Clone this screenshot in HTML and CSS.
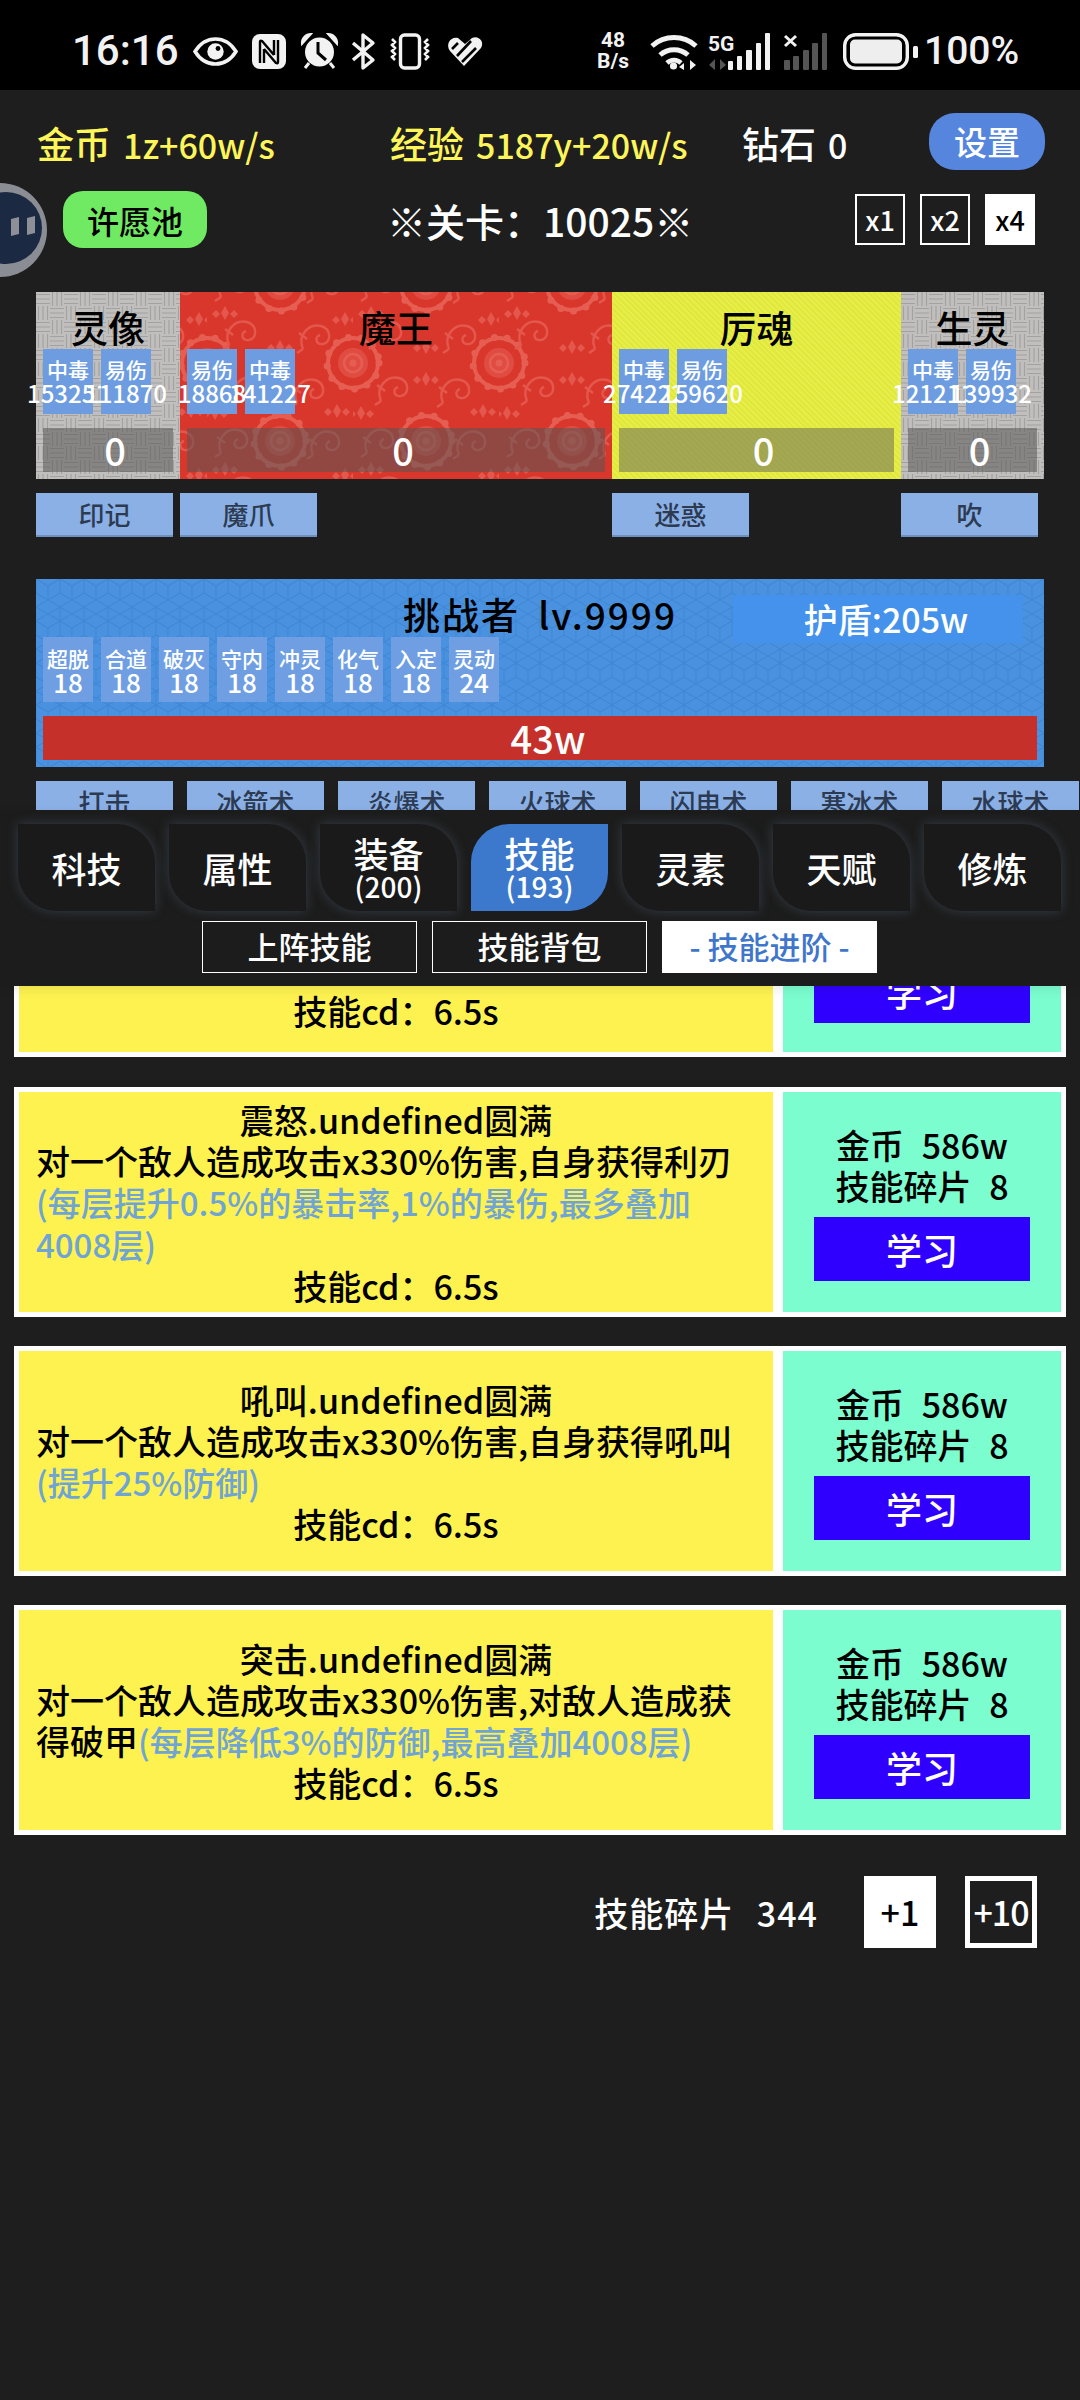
FILE: index.html
```html
<!DOCTYPE html>
<html lang="zh">
<head>
<meta charset="utf-8">
<title>技能进阶</title>
<link rel="stylesheet" href="styles.css">
</head>
<body>
<div class="screen">
  <header class="status">
    <span class="clock">16:16</span>
    <svg class="ic eye" viewBox="0 0 45 29"><path d="M2 14.5C8 5 15 2 22.5 2S37 5 43 14.5C37 24 30 27 22.5 27S8 24 2 14.5Z" fill="none" stroke="#f2f2f2" stroke-width="3.6"/><circle cx="22.5" cy="14.5" r="8.2" fill="#f2f2f2"/><circle cx="25" cy="11.5" r="2.4" fill="#000"/></svg>
    <svg class="ic nfc" viewBox="0 0 34 35"><rect width="34" height="35" rx="8" fill="#f2f2f2"/><path d="M8 29V8q0-2 2-1L22 21M26 6v22q0 2-2 1L12 15M12 15v14M22 21V6" fill="none" stroke="#000" stroke-width="2.4"/></svg>
    <svg class="ic alarm" viewBox="0 0 37 36"><circle cx="18.500" cy="19" r="14.500" fill="#f2f2f2"/><path d="M17 9v11l8 7" fill="none" stroke="#000" stroke-width="3"/><path d="M1 11A9 9 0 0 1 10 1L1 11ZM36 11A9 9 0 0 0 27 1L36 11Z" fill="#f2f2f2" stroke="#f2f2f2" stroke-width="2"/><path d="M8 30l-4 5M29 30l4 5" stroke="#f2f2f2" stroke-width="3"/></svg>
    <svg class="ic bt" viewBox="0 0 25 37"><path d="M2 10l20 17-10 8V2l10 8L2 27" fill="none" stroke="#f2f2f2" stroke-width="3.4" stroke-linejoin="round"/></svg>
    <svg class="ic vib" viewBox="0 0 42 37"><rect x="11.500" y="2" width="19" height="33" rx="4" fill="none" stroke="#f2f2f2" stroke-width="3.4"/><path d="M3 6l3 3-3 3 3 3-3 3 3 3-3 3 3 3M39 6l-3 3 3 3-3 3 3 3-3 3 3 3-3 3" fill="none" stroke="#f2f2f2" stroke-width="2.6"/></svg>
    <svg class="ic heart" viewBox="0 0 36 30"><path d="M17 30L3 15C-2 8 4 0 11 2l7 6 7-6c6-3 13 3 9 10Z" fill="#f2f2f2"/><path d="M10 20L24 5M5 13L11 7M15 26L29 12" stroke="#000" stroke-width="2.6"/></svg>
    <div class="netspeed"><span>48</span><span>B/s</span></div>
    <svg class="ic wifi" viewBox="0 0 48 37"><path d="M2 13A33 33 0 0 1 46 13" fill="none" stroke="#f2f2f2" stroke-width="5"/><path d="M10 22A21 21 0 0 1 38 22" fill="none" stroke="#f2f2f2" stroke-width="5"/><path d="M17 30A10 10 0 0 1 31 30" fill="none" stroke="#f2f2f2" stroke-width="4.600"/><circle cx="23.500" cy="33" r="3.600" fill="#f2f2f2"/><path d="M34 30l-5 4 5 3ZM40 27v10l6-5Z" fill="#f2f2f2"/></svg>
    <svg class="ic sig1" viewBox="0 0 63 37"><text x="0" y="18" class="five-g">5G</text><path d="M7 26v11l-6-5ZM12 26v11l6-5Z" fill="#555"/><g fill="#f2f2f2"><rect x="20" y="28" width="5" height="9" rx="1"/><rect x="29" y="23" width="5" height="14" rx="1"/><rect x="38" y="17" width="6" height="20" rx="1"/><rect x="48" y="10" width="5" height="27" rx="1"/><rect x="57" y="0" width="5" height="37" rx="1"/></g></svg>
    <svg class="ic sig2" viewBox="0 0 44 37"><path d="M1 3l11 10M12 3L1 13" stroke="#f2f2f2" stroke-width="3"/><g fill="#555"><rect x="0" y="27" width="6" height="10" rx="1"/><rect x="9" y="23" width="6" height="14" rx="1"/><rect x="19" y="17" width="6" height="20" rx="1"/><rect x="28" y="10" width="6" height="27" rx="1"/><rect x="38" y="0" width="5" height="37" rx="1"/></g></svg>
    <svg class="ic batt" viewBox="0 0 75 37"><rect x="1.700" y="1.700" width="62.600" height="33.600" rx="11" fill="none" stroke="#f2f2f2" stroke-width="3.400"/><rect x="7" y="6.500" width="52" height="24" rx="5" fill="#eee"/><rect x="70" y="13" width="5" height="12" rx="1.500" fill="#f2f2f2"/></svg>
    <span class="pct">100%</span>
  </header>

  <svg class="floatball" viewBox="0 0 50 100"><circle cx="0" cy="50" r="47" fill="#8a8d93"/><circle cx="6" cy="48" r="36" fill="#1b2942"/><path d="M11 39l8-2v17l-8 2ZM27 38l8-2v17l-8 2Z" fill="#8d9197"/></svg>

  <section class="stats">
    <div class="stat gold"><b>金币</b><span>1z+60w/s</span></div>
    <div class="stat gold"><b>经验</b><span>5187y+20w/s</span></div>
    <div class="stat"><b>钻石</b><span>0</span></div>
    <button class="settings">设置</button>
  </section>

  <section class="stage-row">
    <button class="wish">许愿池</button>
    <div class="stage">※关卡：10025※</div>
    <div class="speeds"><span class="speed">x1</span><span class="speed">x2</span><span class="speed on">x4</span></div>
  </section>

  <section class="enemies">
    <div class="enemy col-a stone">
      <div class="name">灵像</div>
      <div class="buffs"><div class="buff"><span>中毒</span><span class="num">153251</span></div><div class="buff"><span>易伤</span><span class="num">111870</span></div></div>
      <div class="hp">0</div>
    </div>
    <div class="enemy col-b crimson">
      <div class="name">魔王</div>
      <div class="buffs"><div class="buff"><span>易伤</span><span class="num">18868</span></div><div class="buff"><span>中毒</span><span class="num">141227</span></div></div>
      <div class="hp">0</div>
    </div>
    <div class="enemy col-c lemon">
      <div class="name">厉魂</div>
      <div class="buffs"><div class="buff"><span>中毒</span><span class="num">274222</span></div><div class="buff"><span>易伤</span><span class="num">159620</span></div></div>
      <div class="hp">0</div>
    </div>
    <div class="enemy col-d stone">
      <div class="name">生灵</div>
      <div class="buffs"><div class="buff"><span>中毒</span><span class="num">121211</span></div><div class="buff"><span>易伤</span><span class="num">139932</span></div></div>
      <div class="hp">0</div>
    </div>
  </section>

  <section class="enemy-moves">
    <div class="col-a"><button class="move">印记</button></div>
    <div class="col-b"><button class="move">魔爪</button></div>
    <div class="col-c"><button class="move">迷惑</button></div>
    <div class="col-d"><button class="move">吹</button></div>
  </section>

  <section class="hero">
    <div class="shield">护盾:205w</div>
    <div class="name">挑战者 lv.9999</div>
    <div class="buffs">
      <div class="buff"><span>超脱</span><span class="num">18</span></div>
      <div class="buff"><span>合道</span><span class="num">18</span></div>
      <div class="buff"><span>破灭</span><span class="num">18</span></div>
      <div class="buff"><span>守内</span><span class="num">18</span></div>
      <div class="buff"><span>冲灵</span><span class="num">18</span></div>
      <div class="buff"><span>化气</span><span class="num">18</span></div>
      <div class="buff"><span>入定</span><span class="num">18</span></div>
      <div class="buff"><span>灵动</span><span class="num">24</span></div>
    </div>
    <div class="hero-hp">43w</div>
  </section>

  <section class="hero-moves">
    <button class="move">打击</button>
    <button class="move">冰箭术</button>
    <button class="move">炎爆术</button>
    <button class="move">火球术</button>
    <button class="move">闪电术</button>
    <button class="move">寒冰术</button>
    <button class="move">水球术</button>
  </section>

  <nav class="panel">
    <div class="tabs">
      <div class="tab">科技</div>
      <div class="tab">属性</div>
      <div class="tab">装备<small>(200)</small></div>
      <div class="tab active">技能<small>(193)</small></div>
      <div class="tab">灵素</div>
      <div class="tab">天赋</div>
      <div class="tab">修炼</div>
    </div>
    <div class="subtabs">
      <div class="subtab">上阵技能</div>
      <div class="subtab">技能背包</div>
      <div class="subtab on">- 技能进阶 -</div>
    </div>
  </nav>

  <main class="list">
    <article class="card cut">
      <div class="info"><div class="line center">技能cd：6.5s</div></div>
      <div class="cost"><button class="learn">学习</button></div>
    </article>
    <article class="card">
      <div class="info">
        <div class="line center">震怒.undefined圆满</div>
        <div class="line">对一个敌人造成攻击x330%伤害,自身获得利刃<span class="note">(每层提升0.5%的暴击率,1%的暴伤,最多叠加4008层)</span></div>
        <div class="line center">技能cd：6.5s</div>
      </div>
      <div class="cost"><div class="line">金币 586w</div><div class="line">技能碎片 8</div><button class="learn">学习</button></div>
    </article>
    <article class="card">
      <div class="info">
        <div class="line center">吼叫.undefined圆满</div>
        <div class="line">对一个敌人造成攻击x330%伤害,自身获得吼叫<span class="note">(提升25%防御)</span></div>
        <div class="line center">技能cd：6.5s</div>
      </div>
      <div class="cost"><div class="line">金币 586w</div><div class="line">技能碎片 8</div><button class="learn">学习</button></div>
    </article>
    <article class="card">
      <div class="info">
        <div class="line center">突击.undefined圆满</div>
        <div class="line">对一个敌人造成攻击x330%伤害,对敌人造成获得破甲<span class="note">(每层降低3%的防御,最高叠加4008层)</span></div>
        <div class="line center">技能cd：6.5s</div>
      </div>
      <div class="cost"><div class="line">金币 586w</div><div class="line">技能碎片 8</div><button class="learn">学习</button></div>
    </article>
  </main>

  <footer class="shards">
    <span class="shards-label">技能碎片 344</span>
    <button class="plus solid">+1</button>
    <button class="plus hollow">+10</button>
  </footer>
</div>
</body>
</html>
```

FILE: styles.css
```css
* { box-sizing: border-box; }
html, body { margin: 0; padding: 0; }
body { background: #1e1e1e; }
button { border: 0; padding: 0; font: inherit; color: inherit; display: block; }

.screen {
  position: relative;
  width: 1080px;
  height: 2400px;
  overflow: hidden;
  background: #1e1e1e;
  color: #fff;
  font-family: "Noto Sans CJK SC", "Noto Sans", sans-serif;
  font-weight: 500;
}

/* status bar */
.status {
  display: flex;
  align-items: center;
  height: 90px;
  padding: 12px 68px 0 72px;
  background: #000;
  color: #f2f2f2;
  font-family: Roboto, sans-serif;
}
.clock { font-size: 42px; font-weight: 500; line-height: 1; }
.pct { font-size: 39px; font-weight: 500; line-height: 1; margin-left: 6px; width: 88px; white-space: nowrap; }
.ic { display: block; flex: none; overflow: visible; }
.eye { width: 45px; height: 29px; margin-left: 14px; }
.nfc { width: 34px; height: 35px; margin-left: 14px; }
.alarm { width: 37px; height: 36px; margin-left: 15px; }
.bt { width: 25px; height: 37px; margin-left: 13px; }
.vib { width: 42px; height: 37px; margin-left: 13px; }
.heart { width: 36px; height: 30px; margin-left: 16px; }
.netspeed {
  display: flex; flex-direction: column; align-items: center;
  width: 38px; margin-left: auto;
  font-size: 21px; font-weight: 700; line-height: 21px;
}
.wifi { width: 48px; height: 37px; margin-left: 18px; }
.sig1 { width: 63px; height: 37px; margin-left: 10px; }
.five-g { font-family: Roboto, sans-serif; font-weight: 700; font-size: 21px; fill: #f2f2f2; }
.sig2 { width: 44px; height: 37px; margin-left: 13px; }
.batt { width: 75px; height: 37px; margin-left: 15px; }

.floatball { position: absolute; left: 0; top: 180px; width: 50px; height: 100px; z-index: 5; }

/* resources */
.stats {
  display: grid;
  grid-template-columns: 353px 352px 187px 116px;
  align-items: center;
  height: 57px;
  margin-top: 22px;
  padding-left: 37px;
}
.stat { display: flex; align-items: baseline; gap: 12px; white-space: nowrap; padding-top: 4px; }
.stat b { font-size: 37px; font-weight: 500; }
.stat span { font-size: 34px; }
.gold { color: #fdf55a; }
.settings {
  height: 57px;
  border-radius: 26px;
  background: #5585dc;
  color: #fff;
  font-size: 33px;
}

.stage-row {
  display: grid;
  grid-template-columns: 324px 468px auto;
  align-items: center;
  height: 57px;
  margin-top: 22px;
  padding-left: 63px;
}
.wish {
  width: 144px; height: 57px;
  border-radius: 20px;
  background: #70ea63;
  color: #000;
  font-size: 32px;
}
.stage { font-size: 39px; white-space: nowrap; }
.speeds { display: flex; gap: 15px; }
.speed {
  display: flex; align-items: center; justify-content: center;
  width: 50px; height: 51px;
  border: 2px solid #fff;
  font-size: 27px;
}
.speed.on { background: #fff; color: #000; }

/* enemies */
.col-a { width: 144px; }
.col-b { width: 432px; }
.col-c { width: 289px; }
.col-d { width: 143px; }
.enemies, .enemy-moves { display: flex; margin: 0 36px; }
.enemies { margin-top: 44px; height: 187px; }
.enemy { height: 187px; padding: 0 7px; }
.name {
  padding-top: 14px;
  height: 57px;
  font-size: 37px;
  line-height: 43px;
  text-align: center;
  color: #000;
}
.buffs { display: flex; gap: 8px; height: 65px; }
.buff {
  display: flex; flex-direction: column; align-items: center;
  flex: none;
  width: 50px; height: 65px;
  padding-top: 9px;
  background: #6d9de0;
  font-size: 21px;
  line-height: 23px;
  white-space: nowrap;
}
.buff .num { font-size: 24px; }
.hp {
  height: 44px;
  margin-top: 14px;
  padding-left: 14px;
  background: rgba(85, 85, 85, 0.55);
  font-size: 38px;
  line-height: 44px;
  text-align: center;
}
.stone {
  background: #c0bfbd url("data:image/svg+xml,%3Csvg xmlns='http://www.w3.org/2000/svg' width='28' height='28'%3E%3Cg stroke='%23a3a2a0' stroke-width='1.2' fill='none'%3E%3Cpath d='M0 2.500h14M0 7h14M0 11.500h14M14 16.500h14M14 21h14M14 25.500h14M16.500 0v14M21 0v14M25.500 0v14M2.500 14v14M7 14v14M11.500 14v14'/%3E%3C/g%3E%3C/svg%3E");
}
.crimson {
  background: #d9362c url("data:image/svg+xml,%3Csvg xmlns='http://www.w3.org/2000/svg' xmlns:xlink='http://www.w3.org/1999/xlink' width='146' height='156'%3E%3Cdefs%3E%3Cg id='f' fill='none' stroke='%23e65e52'%3E%3Ccircle r='25' stroke-width='4'/%3E%3Ccircle r='26' stroke-width='7' stroke-dasharray='0 13' stroke-linecap='round'/%3E%3Ccircle r='15' fill='%23e04c42' stroke='none'/%3E%3Ccircle r='9' stroke-width='2.500'/%3E%3Ccircle r='3.500' fill='%23e65e52' stroke='none'/%3E%3C/g%3E%3Cpath id='s' d='M-16 12C-22 -2 -10 -14 2 -11C12 -8 13 5 4 7C-3 8 -5 0 1 -2M-16 12L-22 16M-12 2L-20 -4' fill='none' stroke='%23e4574c' stroke-width='2.400'/%3E%3Cpath id='l' d='M0 -7L4 0L0 7L-4 0ZM-9 -3L-5 1L-9 5L-13 1ZM9 -3L13 1L9 5L5 1Z' fill='%23e4574c'/%3E%3C/defs%3E%3Cuse xlink:href='%23f'/%3E%3Cuse xlink:href='%23f' x='146'/%3E%3Cuse xlink:href='%23f' y='156'/%3E%3Cuse xlink:href='%23f' x='146' y='156'/%3E%3Cuse xlink:href='%23f' x='73' y='78'/%3E%3Cuse xlink:href='%23s' x='44' y='26'/%3E%3Cuse xlink:href='%23s' x='106' y='28'/%3E%3Cuse xlink:href='%23s' x='30' y='78'/%3E%3Cuse xlink:href='%23s' x='122' y='80'/%3E%3Cuse xlink:href='%23s' x='38' y='126'/%3E%3Cuse xlink:href='%23s' x='112' y='130'/%3E%3Cuse xlink:href='%23l' x='73' y='16'/%3E%3Cuse xlink:href='%23l' x='73' y='140'/%3E%3Cuse xlink:href='%23l' x='8' y='50'/%3E%3Cuse xlink:href='%23l' x='138' y='112'/%3E%3Cuse xlink:href='%23l' x='18' y='106'/%3E%3Cuse xlink:href='%23l' x='130' y='48'/%3E%3C/svg%3E") 27px 71px;
}
.lemon {
  background: repeating-linear-gradient(45deg, #e0e83a 0 2px, #e7ee4c 2px 4px);
}
.lemon .hp { background: rgba(110, 110, 90, 0.55); }

.enemy-moves { margin-top: 14px; }
.move {
  width: 137px; height: 44px;
  border-bottom: 2px solid #6f8fbe;
  background: #8bb0e6;
  color: #2c3b52;
  font-size: 26px;
  line-height: 42px;
  text-align: center;
}

/* challenger */
.hero {
  position: relative;
  height: 188px;
  margin: 42px 36px 0;
  padding: 0 7px;
  background: #4a92e0 url("data:image/svg+xml,%3Csvg xmlns='http://www.w3.org/2000/svg' width='24' height='42'%3E%3Cpath d='M0 0L12 7L24 0M12 7V21M12 21L0 28V42M12 21L24 28V42M0 14L12 21L24 14M0 0V14M24 0V14M12 35L0 42M12 35L24 42M12 35L0 28M12 35L24 28' fill='none' stroke='%233f88d6' stroke-width='1.100'/%3E%3C/svg%3E");
}
.hero .name { height: 58px; font-size: 37px; word-spacing: 8px; letter-spacing: 2px; }
.hero .buff { background: #6f9fe2; line-height: 22px; padding-top: 10px; }
.hero .buff .num { font-size: 26px; line-height: 25px; }
.shield {
  position: absolute;
  left: 697px; top: 16px;
  width: 290px; height: 48px;
  padding-left: 16px;
  background: #4592ec;
  font-size: 34px;
  line-height: 48px;
  text-align: center;
}
.hero-hp {
  height: 44px;
  margin-top: 14px;
  padding-left: 16px;
  background: #c5302a;
  font-size: 38px;
  line-height: 44px;
  text-align: center;
}
.hero-moves {
  display: flex;
  gap: 14px;
  height: 29px;
  margin-top: 14px;
  padding-left: 36px;
  overflow: hidden;
}
.hero-moves .move { flex: none; }

/* tabs */
.panel {
  position: relative;
  z-index: 3;
  height: 176px;
  padding: 14px 0 0 18px;
  background: #1c1c1c;
  box-shadow: 0 4px 10px rgba(0, 0, 0, 0.08);
}
.tabs { display: flex; gap: 14px; }
.tab {
  display: flex; flex-direction: column; align-items: center; justify-content: center;
  width: 137px; height: 87px;
  border-radius: 0 38px 0 38px;
  background: #1a1a1a;
  box-shadow: 0 0 12px rgba(85, 105, 125, 0.45);
  font-size: 35px;
  line-height: 36px;
}
.tab small { font-size: 28px; line-height: 30px; }
.tab.active { background: #3c78cc; border-radius: 38px 0 38px 0; box-shadow: none; }
.subtabs { display: flex; gap: 15px; margin: 10px 0 0 184px; }
.subtab {
  width: 215px; height: 52px;
  border: 1.5px solid #fff;
  font-size: 31px;
  line-height: 48px;
  text-align: center;
}
.subtab.on { background: #fff; color: #3f76cc; }

/* list */
.list {
  display: flex;
  flex-direction: column;
  gap: 29px;
  padding: 0 14px;
  color: #000;
}
.card {
  display: flex;
  gap: 10px;
  height: 230px;
  padding: 5px;
  background: #fff;
}
.cut { height: 71px; padding-top: 0; margin-bottom: 1px; }
.info {
  display: flex; flex-direction: column; justify-content: center;
  width: 754px;
  padding: 0 30px 0 17px;
  background: #fdf250;
}
.cost {
  display: flex; flex-direction: column; align-items: center; justify-content: center;
  width: 278px;
  background: #7bfdd0;
}
.line { font-size: 34px; line-height: 41px; }
.cost .line { word-spacing: 10px; }
.center { text-align: center; margin-right: -13px; }
.note { color: #6fa4d4; font-size: 33px; }
.learn {
  flex: none;
  width: 216px; height: 64px;
  margin-top: 11px;
  background: #3000ff;
  color: #fff;
  font-size: 36px;
  text-align: center;
}
.cut .info { justify-content: flex-end; padding-bottom: 21px; }
.cut .cost { justify-content: flex-end; padding-bottom: 29px; overflow: hidden; }

/* shards */
.shards {
  display: flex;
  align-items: center;
  justify-content: flex-end;
  height: 72px;
  margin-top: 41px;
  padding-right: 43px;
}
.shards-label { font-size: 34px; letter-spacing: 1px; word-spacing: 14px; margin-right: 46px; white-space: nowrap; }
.plus {
  width: 72px; height: 72px;
  font-size: 34px;
  line-height: 1;
  text-align: center;
  white-space: nowrap;
}
.plus.solid { background: #fff; color: #000; margin-right: 29px; }
.plus.hollow { border: 5px solid #fff; background: transparent; color: #fff; letter-spacing: -1px; }
```
